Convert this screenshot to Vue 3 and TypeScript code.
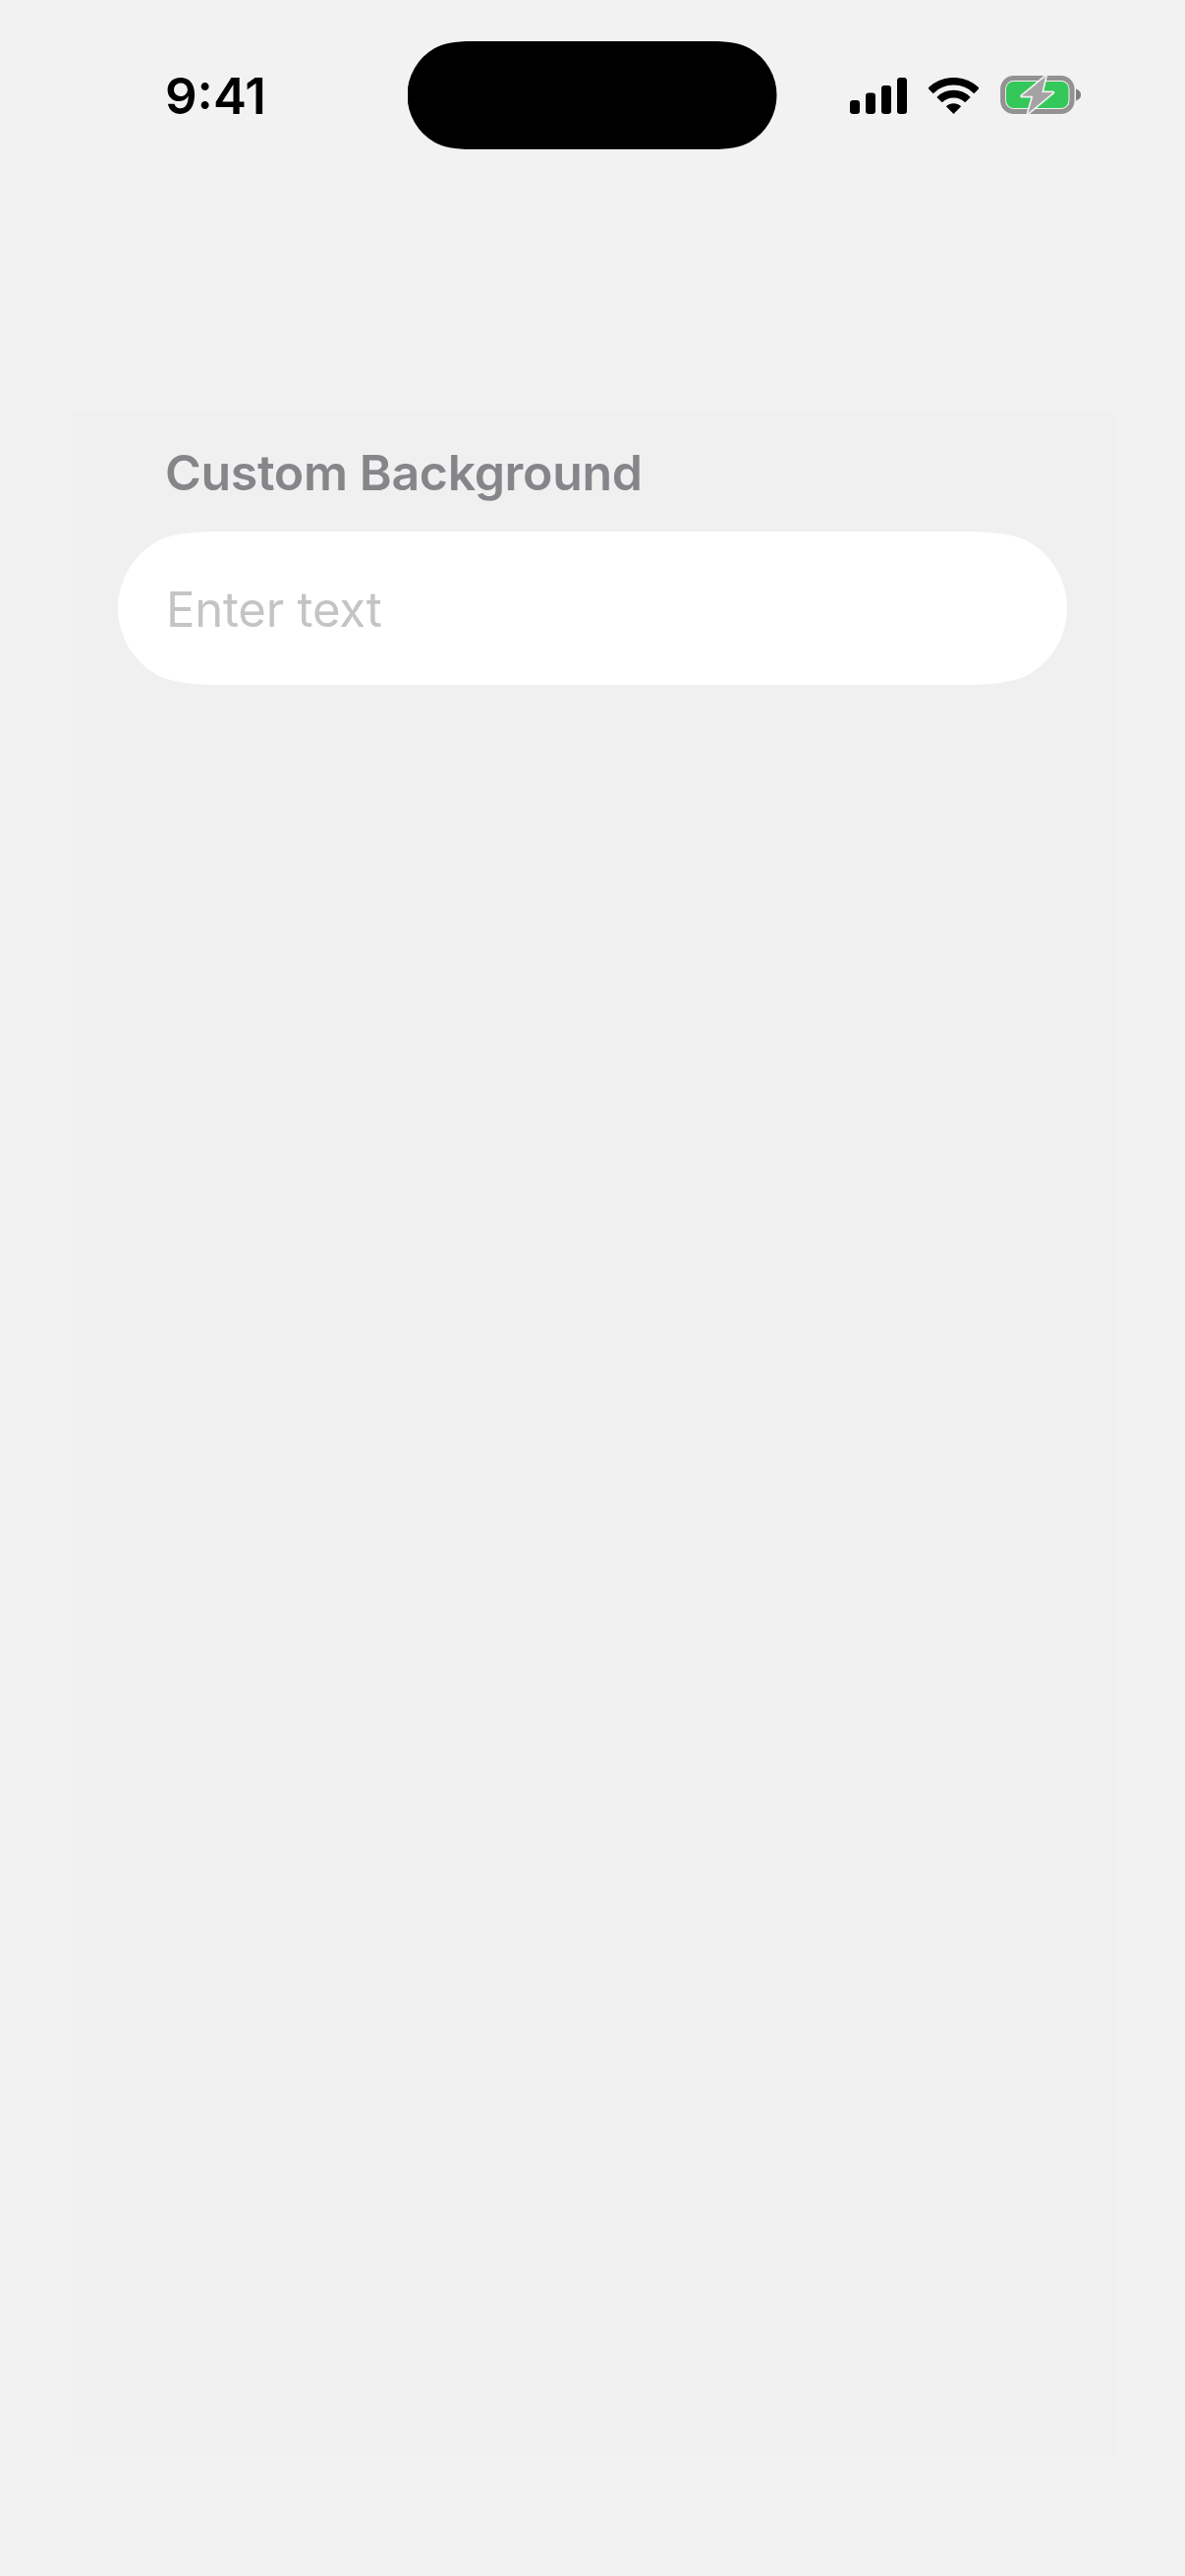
<script setup lang="ts">
const title = "Custom Background";
const placeholder = "Enter text";
const bars: { x: number; y: number; h: number }[] = [
  { x: 0, y: 23, h: 14 },
  { x: 16, y: 15.5, h: 21.5 },
  { x: 32, y: 8, h: 29 },
  { x: 48, y: 0, h: 37 },
];
</script>

<template>
  <div class="screen">
    <header class="status">
      <span class="time">9:41</span>
      <div class="island"></div>
      <div class="icons">
        <svg class="signal" width="58" height="37" viewBox="0 0 58 37">
          <rect v-for="b in bars" :key="b.x" :x="b.x" :y="b.y" width="10" :height="b.h" rx="3.2" fill="#000" />
        </svg>
        <svg class="wifi" width="51" height="37" viewBox="0 0 50.4 36.7">
          <path d="M1.9 13.4A32.9 32.9 0 0 1 48.5 13.4" fill="none" stroke="#000" stroke-width="7.6" />
          <path d="M10.9 22.4A20.2 20.2 0 0 1 39.5 22.4" fill="none" stroke="#000" stroke-width="7.6" />
          <path d="M25.2 36.7L17.6 29.1A10.8 10.8 0 0 1 32.8 29.1Z" fill="#000" />
        </svg>
        <svg class="battery" width="84" height="40" viewBox="0 0 84 40">
          <rect x="2.6" y="2.6" width="70.4" height="33.8" rx="11" fill="none" stroke="#929292" stroke-width="5" />
          <rect x="6" y="6" width="63.5" height="27" rx="7.5" fill="#34c759" />
          <path d="M77 13.5C81 15 82 17 82 19.5C82 22 81 24 77 25.5Z" fill="#7f7f7f" />
          <path d="M46 1L22 20.8L33.4 20.8L28.5 38L53.5 17.2L42.2 17.2Z" fill="#a3a3a3" stroke="#f0f0f0" stroke-width="3.5" stroke-linejoin="round" paint-order="stroke" />
        </svg>
      </div>
    </header>

    <main class="panel">
      <label class="label" for="field">{{ title }}</label>
      <input id="field" class="field" type="text" :placeholder="placeholder" />
    </main>
  </div>
</template>

<style>
html,
body {
  margin: 0;
  background: #f2f2f2;
}
</style>

<style scoped>
.screen {
  width: 1206px;
  height: 2622px;
  background: #f2f2f2;
  overflow: hidden;
  font-family: Inter, "Noto Sans", sans-serif;
}

.status {
  display: flex;
  align-items: center;
  height: 110px;
  padding: 42px 0 0 168px;
}

.time {
  width: 246.5px;
  padding-top: 2px;
  font-size: 51px;
  line-height: 60px;
  font-weight: 600;
  color: #000;
}

.island {
  width: 376px;
  height: 110px;
  background: #000;
  clip-path: path("M0 55A55 55 0 0 1 28 7C36 2.6 48 0 66 0H310C328 0 340 2.6 348 7A55 55 0 0 1 376 55A55 55 0 0 1 348 103C340 107.4 328 110 310 110H66C48 110 36 107.4 28 103A55 55 0 0 1 0 55Z");
}

.icons {
  display: flex;
  align-items: center;
  gap: 22px;
  margin-left: 74.5px;
}

.icons svg {
  display: block;
}

.panel {
  display: flex;
  flex-direction: column;
  width: 1065px;
  height: 2080px;
  margin: 268px 0 0 72px;
  padding-top: 31px;
  box-sizing: border-box;
  background: #f0f0f0;
  border-radius: 6px;
}

.label {
  margin-left: 96px;
  font-size: 50px;
  line-height: 60px;
  font-weight: 600;
  letter-spacing: -0.33px;
  color: #86868a;
}

.field {
  display: block;
  width: 966px;
  height: 156px;
  margin: 30px 0 0 48px;
  padding: 3px 0 0 49px;
  box-sizing: border-box;
  border: 0;
  outline: 0;
  background: #fff;
  clip-path: path("M0 78A78 78 0 0 1 40 10C50 4.4 70 0 100 0H866C896 0 916 4.4 926 10A78 78 0 0 1 966 78A78 78 0 0 1 926 146C916 151.6 896 156 866 156H100C70 156 50 151.6 40 146A78 78 0 0 1 0 78Z");
  font-family: inherit;
  font-size: 49px;
  letter-spacing: -0.2px;
  font-weight: 400;
  color: #333;
}

.field::placeholder {
  color: #c4c4c4;
  opacity: 1;
}
</style>
